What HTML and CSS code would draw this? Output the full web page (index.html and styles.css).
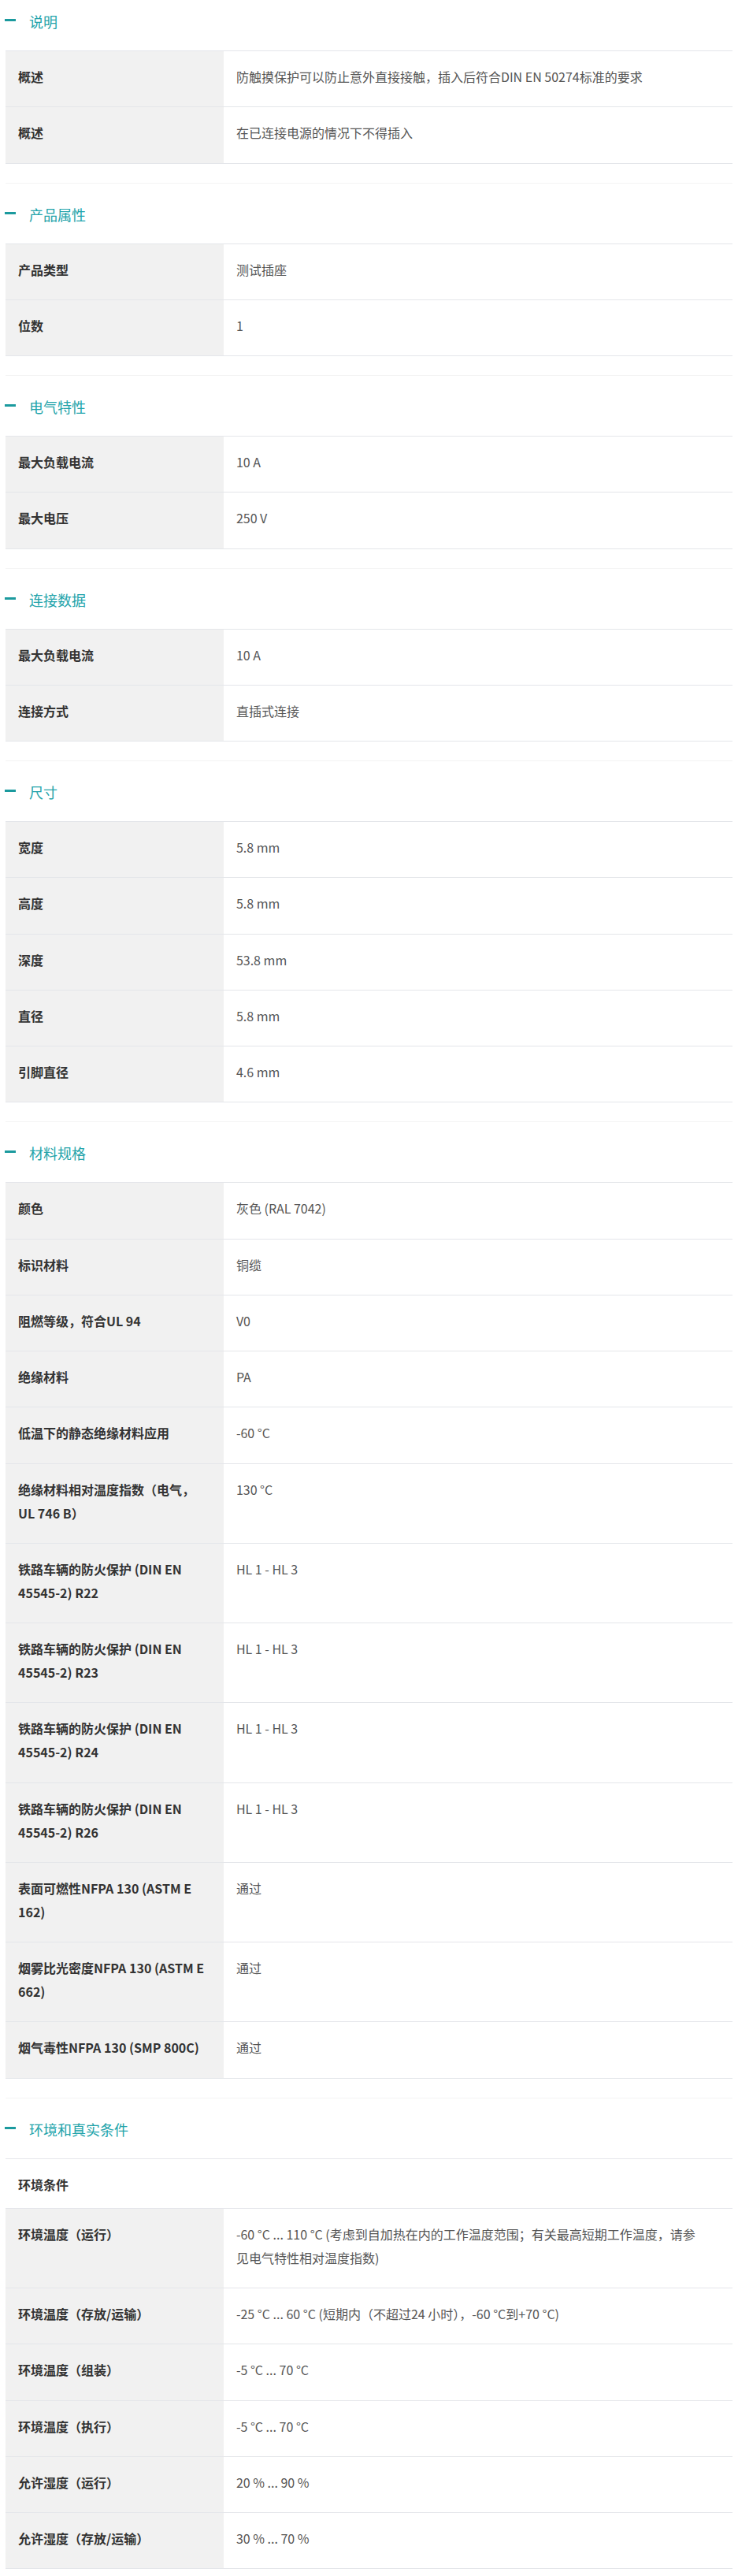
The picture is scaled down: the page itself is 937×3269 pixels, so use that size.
FILE: index.html
```html
<!DOCTYPE html>
<html lang="zh-CN">
<head>
<meta charset="utf-8">
<title>技术数据</title>
<link rel="stylesheet" href="styles.css">
</head>
<body>
<main class="specs">

  <section class="spec-section spec-section--first">
    <h2 class="spec-title">说明</h2>
    <dl class="spec-table">
      <div class="spec-row"><dt class="spec-label">概述</dt><dd class="spec-value">防触摸保护可以防止意外直接接触，插入后符合DIN EN 50274标准的要求</dd></div>
      <div class="spec-row"><dt class="spec-label">概述</dt><dd class="spec-value">在已连接电源的情况下不得插入</dd></div>
    </dl>
  </section>

  <section class="spec-section">
    <h2 class="spec-title">产品属性</h2>
    <dl class="spec-table">
      <div class="spec-row"><dt class="spec-label">产品类型</dt><dd class="spec-value">测试插座</dd></div>
      <div class="spec-row"><dt class="spec-label">位数</dt><dd class="spec-value">1</dd></div>
    </dl>
  </section>

  <section class="spec-section">
    <h2 class="spec-title">电气特性</h2>
    <dl class="spec-table">
      <div class="spec-row"><dt class="spec-label">最大负载电流</dt><dd class="spec-value">10 A</dd></div>
      <div class="spec-row"><dt class="spec-label">最大电压</dt><dd class="spec-value">250 V</dd></div>
    </dl>
  </section>

  <section class="spec-section">
    <h2 class="spec-title">连接数据</h2>
    <dl class="spec-table">
      <div class="spec-row"><dt class="spec-label">最大负载电流</dt><dd class="spec-value">10 A</dd></div>
      <div class="spec-row"><dt class="spec-label">连接方式</dt><dd class="spec-value">直插式连接</dd></div>
    </dl>
  </section>

  <section class="spec-section">
    <h2 class="spec-title">尺寸</h2>
    <dl class="spec-table">
      <div class="spec-row"><dt class="spec-label">宽度</dt><dd class="spec-value">5.8 mm</dd></div>
      <div class="spec-row"><dt class="spec-label">高度</dt><dd class="spec-value">5.8 mm</dd></div>
      <div class="spec-row"><dt class="spec-label">深度</dt><dd class="spec-value">53.8 mm</dd></div>
      <div class="spec-row"><dt class="spec-label">直径</dt><dd class="spec-value">5.8 mm</dd></div>
      <div class="spec-row"><dt class="spec-label">引脚直径</dt><dd class="spec-value">4.6 mm</dd></div>
    </dl>
  </section>

  <section class="spec-section">
    <h2 class="spec-title">材料规格</h2>
    <dl class="spec-table">
      <div class="spec-row"><dt class="spec-label">颜色</dt><dd class="spec-value">灰色 (RAL 7042)</dd></div>
      <div class="spec-row"><dt class="spec-label">标识材料</dt><dd class="spec-value">铜缆</dd></div>
      <div class="spec-row"><dt class="spec-label">阻燃等级，符合UL 94</dt><dd class="spec-value">V0</dd></div>
      <div class="spec-row"><dt class="spec-label">绝缘材料</dt><dd class="spec-value">PA</dd></div>
      <div class="spec-row"><dt class="spec-label">低温下的静态绝缘材料应用</dt><dd class="spec-value">-60 °C</dd></div>
      <div class="spec-row"><dt class="spec-label">绝缘材料相对温度指数（电气，<br>UL 746 B）</dt><dd class="spec-value">130 °C</dd></div>
      <div class="spec-row"><dt class="spec-label">铁路车辆的防火保护 (DIN EN<br>45545-2) R22</dt><dd class="spec-value">HL 1 - HL 3</dd></div>
      <div class="spec-row"><dt class="spec-label">铁路车辆的防火保护 (DIN EN<br>45545-2) R23</dt><dd class="spec-value">HL 1 - HL 3</dd></div>
      <div class="spec-row"><dt class="spec-label">铁路车辆的防火保护 (DIN EN<br>45545-2) R24</dt><dd class="spec-value">HL 1 - HL 3</dd></div>
      <div class="spec-row"><dt class="spec-label">铁路车辆的防火保护 (DIN EN<br>45545-2) R26</dt><dd class="spec-value">HL 1 - HL 3</dd></div>
      <div class="spec-row"><dt class="spec-label">表面可燃性NFPA 130 (ASTM E<br>162)</dt><dd class="spec-value">通过</dd></div>
      <div class="spec-row"><dt class="spec-label">烟雾比光密度NFPA 130 (ASTM E<br>662)</dt><dd class="spec-value">通过</dd></div>
      <div class="spec-row"><dt class="spec-label">烟气毒性NFPA 130 (SMP 800C)</dt><dd class="spec-value">通过</dd></div>
    </dl>
  </section>

  <section class="spec-section">
    <h2 class="spec-title">环境和真实条件</h2>
    <dl class="spec-table">
      <div class="spec-row spec-row--full"><dt class="spec-label spec-label--group">环境条件</dt></div>
      <div class="spec-row"><dt class="spec-label">环境温度（运行）</dt><dd class="spec-value">-60 °C ... 110 °C (考虑到自加热在内的工作温度范围；有关最高短期工作温度，请参见电气特性相对温度指数)</dd></div>
      <div class="spec-row"><dt class="spec-label">环境温度（存放/运输）</dt><dd class="spec-value">-25 °C ... 60 °C (短期内（不超过24 小时），-60 °C到+70 °C)</dd></div>
      <div class="spec-row"><dt class="spec-label">环境温度（组装）</dt><dd class="spec-value">-5 °C ... 70 °C</dd></div>
      <div class="spec-row"><dt class="spec-label">环境温度（执行）</dt><dd class="spec-value">-5 °C ... 70 °C</dd></div>
      <div class="spec-row"><dt class="spec-label">允许湿度（运行）</dt><dd class="spec-value">20 % ... 90 %</dd></div>
      <div class="spec-row"><dt class="spec-label">允许湿度（存放/运输）</dt><dd class="spec-value">30 % ... 70 %</dd></div>
    </dl>
  </section>

</main>
</body>
</html>
```

FILE: styles.css
```css
html, body {
  margin: 0;
  padding: 0;
  background: #ffffff;
}

body {
  font-family: "Noto Sans CJK SC", "Noto Sans", sans-serif;
  font-size: 16px;
  color: #555555;
}

.specs {
  padding: 0 7px;
}

.spec-section {
  border-top: 1px solid #f4f4f4;
  padding-bottom: 24px;
}

.spec-section--first {
  border-top: 0;
}

.spec-title {
  display: flex;
  align-items: center;
  gap: 17px;
  margin: 0 0 0 -1px;
  padding: 26px 0 24px;
  font-size: 18px;
  line-height: 26px;
  font-weight: 400;
  color: #22a3aa;
}

.spec-section--first .spec-title {
  padding-top: 14px;
}

.spec-title::before {
  content: "";
  flex: none;
  width: 14px;
  height: 3px;
  margin-top: -3px;
  background: #1b9a9e;
}

.spec-table {
  margin: 0;
  border-bottom: 1px solid #e4e6ea;
}

.spec-row {
  display: grid;
  grid-template-columns: 30% 1fr;
  border-top: 1px solid #e4e6ea;
}

.spec-row--full {
  grid-template-columns: 1fr;
}

.spec-label {
  margin: 0;
  padding: 17px 8px 23.25px 16px;
  background: #f1f1f1;
  font-weight: 700;
  color: #333333;
  line-height: 30px;
}

.spec-label--group {
  background: #ffffff;
  padding-bottom: 15.25px;
}

.spec-value {
  margin: 0;
  padding: 17px 45px 23.25px 16px;
  color: #555555;
  line-height: 30px;
}
```
